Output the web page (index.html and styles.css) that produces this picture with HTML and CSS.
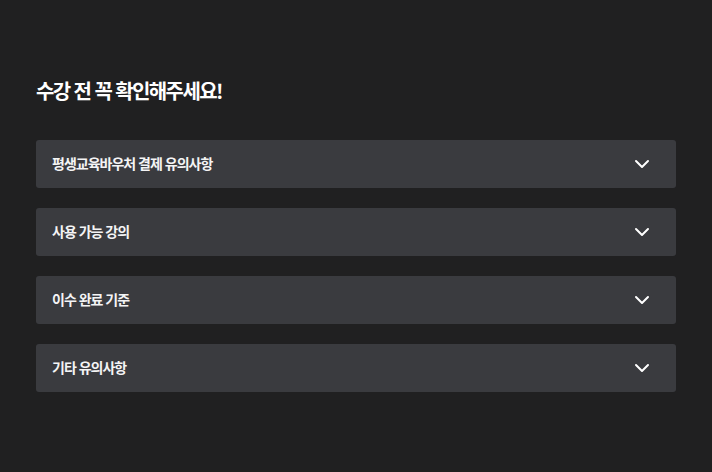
FILE: index.html
```html
<!DOCTYPE html>
<html lang="ko">
<head>
<meta charset="utf-8">
<link rel="stylesheet" href="styles.css">
</head>
<body>
<main class="page">
  <h2 class="title">수강 전 꼭 확인해주세요!</h2>
  <div class="list">
    <div class="item"><span class="label">평생교육바우처 결제 유의사항</span><svg class="chev" viewBox="0 0 24 24" width="24" height="24"><path d="M6 9l6 6 6-6" fill="none" stroke="#fff" stroke-width="2" stroke-linecap="round" stroke-linejoin="round"/></svg></div>
    <div class="item"><span class="label">사용 가능 강의</span><svg class="chev" viewBox="0 0 24 24" width="24" height="24"><path d="M6 9l6 6 6-6" fill="none" stroke="#fff" stroke-width="2" stroke-linecap="round" stroke-linejoin="round"/></svg></div>
    <div class="item"><span class="label">이수 완료 기준</span><svg class="chev" viewBox="0 0 24 24" width="24" height="24"><path d="M6 9l6 6 6-6" fill="none" stroke="#fff" stroke-width="2" stroke-linecap="round" stroke-linejoin="round"/></svg></div>
    <div class="item"><span class="label">기타 유의사항</span><svg class="chev" viewBox="0 0 24 24" width="24" height="24"><path d="M6 9l6 6 6-6" fill="none" stroke="#fff" stroke-width="2" stroke-linecap="round" stroke-linejoin="round"/></svg></div>
  </div>
</main>
</body>
</html>
```
FILE: styles.css
```css
html, body {
  margin: 0;
  padding: 0;
  background: #202021;
}
body {
  font-family: "Noto Sans CJK KR", "Noto Sans", sans-serif;
  color: #fff;
}
.page {
  padding: 77px 36px 40px;
}
.title {
  margin: 0;
  font-size: 20px;
  line-height: 28px;
  font-weight: 700;
  letter-spacing: -1.6px;
  color: #fff;
}
.list {
  margin-top: 35px;
  display: flex;
  flex-direction: column;
  gap: 20px;
}
.item {
  height: 48px;
  box-sizing: border-box;
  display: flex;
  align-items: center;
  justify-content: space-between;
  padding: 0 22px 2px 16px;
  background: #3a3b3f;
  border-radius: 3px;
}
.label {
  font-size: 14px;
  font-weight: 700;
  letter-spacing: -1px;
  color: #f4f4f5;
}
.chev {
  display: block;
  margin-top: 2px;
}
```
